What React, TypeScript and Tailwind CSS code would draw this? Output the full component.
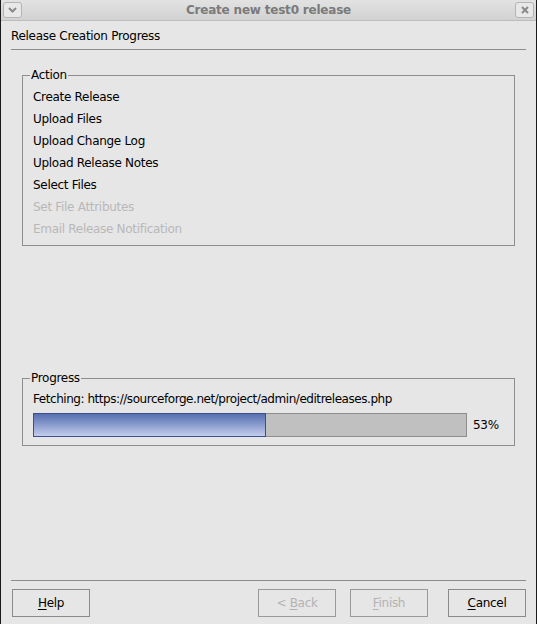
import React from "react";

const steps = [
  { label: "Create Release", done: true },
  { label: "Upload Files", done: true },
  { label: "Upload Change Log", done: true },
  { label: "Upload Release Notes", done: true },
  { label: "Select Files", done: true },
  { label: "Set File Attributes", done: false },
  { label: "Email Release Notification", done: false },
];

function TitleButton({ children }: { children: React.ReactNode }) {
  return (
    <div className="w-[19px] h-[16px] rounded-[3px] border border-[#b4b4b4] bg-[#e8e8e8] flex items-center justify-center">
      {children}
    </div>
  );
}

function DialogButton({
  mnemonic,
  rest,
  prefix,
  disabled,
}: {
  mnemonic: string;
  rest: string;
  prefix?: string;
  disabled?: boolean;
}) {
  return (
    <button
      className={`w-[78px] h-[28px] border bg-[#e6e6e6] text-[12px] tracking-[-0.3px] ${
        disabled
          ? "border-[#9a9a9a] text-[#b3b3b3]"
          : "border-[#8a8a8a] text-black"
      }`}
    >
      {prefix}
      <span className="underline underline-offset-2">{mnemonic}</span>
      {rest}
    </button>
  );
}

export default function App() {
  const percent = 53;

  return (
    <div className="w-[537px] h-[624px] bg-[#e6e6e6] border-x border-[#1a1a1a] flex flex-col font-['DejaVu_Sans',sans-serif] text-[12px] tracking-[-0.3px] text-black overflow-hidden">
      {/* window title bar */}
      <div className="h-[21px] bg-gradient-to-b from-[#e2e2e2] to-[#d2d2d2] border-b border-[#bdbdbd] flex items-center px-[2px]">
        <TitleButton>
          <svg width="9" height="6" viewBox="0 0 9 6">
            <path d="M1 1 L4.5 4.5 L8 1" stroke="#8a8a8a" strokeWidth="2" fill="none" />
          </svg>
        </TitleButton>
        <div className="flex-1 text-center font-bold text-[#7a7a7a] tracking-[-0.2px]">
          Create new test0 release
        </div>
        <TitleButton>
          <svg width="8" height="8" viewBox="0 0 8 8">
            <path d="M1 1 L7 7 M7 1 L1 7" stroke="#8a8a8a" strokeWidth="2" />
          </svg>
        </TitleButton>
      </div>

      <div className="flex-1 flex flex-col px-[10px]">
        <div className="pt-[7px] leading-[16px]">Release Creation Progress</div>
        <div className="mt-[5px] h-px bg-[#8c8c8c]" />

        <fieldset className="mt-[17px] mx-[11px] border border-[#8e8e8e] px-[10px] pb-[5px]">
          <legend className="ml-[-3px] px-[1px] leading-[16px]">Action</legend>
          <div className="mt-[3px]">
            {steps.map((s) => (
              <div
                key={s.label}
                className={`leading-[22px] ${s.done ? "text-black" : "text-[#b8b8b8]"}`}
              >
                {s.label}
              </div>
            ))}
          </div>
        </fieldset>

        <fieldset className="mt-[124px] mx-[11px] border border-[#8e8e8e] px-[10px] pb-[8px]">
          <legend className="ml-[-3px] px-[1px] leading-[16px]">Progress</legend>
          <div className="mt-[5px] leading-[16px] tracking-[-0.45px]">
            Fetching: https://sourceforge.net/project/admin/editreleases.php
          </div>
          <div className="mt-[6px] flex items-center">
            <div className="w-[434px] h-[24px] flex">
              <div
                className="h-full border border-[#3b4f8c] bg-gradient-to-b from-[#5670b0] to-[#c4ccec]"
                style={{ width: `${Math.round((440 * percent) / 100)}px` }}
              />
              <div className="flex-1 h-full border border-l-0 border-[#8e8e8e] bg-[#c0c0c0]" />
            </div>
            <span className="ml-[6px]">{percent}%</span>
          </div>
        </fieldset>

        <div className="flex-1" />
        <div className="h-px bg-[#8c8c8c]" />
        <div className="mt-[8px] mb-[7px] flex items-center">
          <div className="ml-[1px]">
            <DialogButton mnemonic="H" rest="elp" />
          </div>
          <div className="flex-1" />
          <DialogButton prefix="< " mnemonic="B" rest="ack" disabled />
          <div className="w-[14px]" />
          <DialogButton mnemonic="F" rest="inish" disabled />
          <div className="w-[20px]" />
          <DialogButton mnemonic="C" rest="ancel" />
        </div>
      </div>
    </div>
  );
}
